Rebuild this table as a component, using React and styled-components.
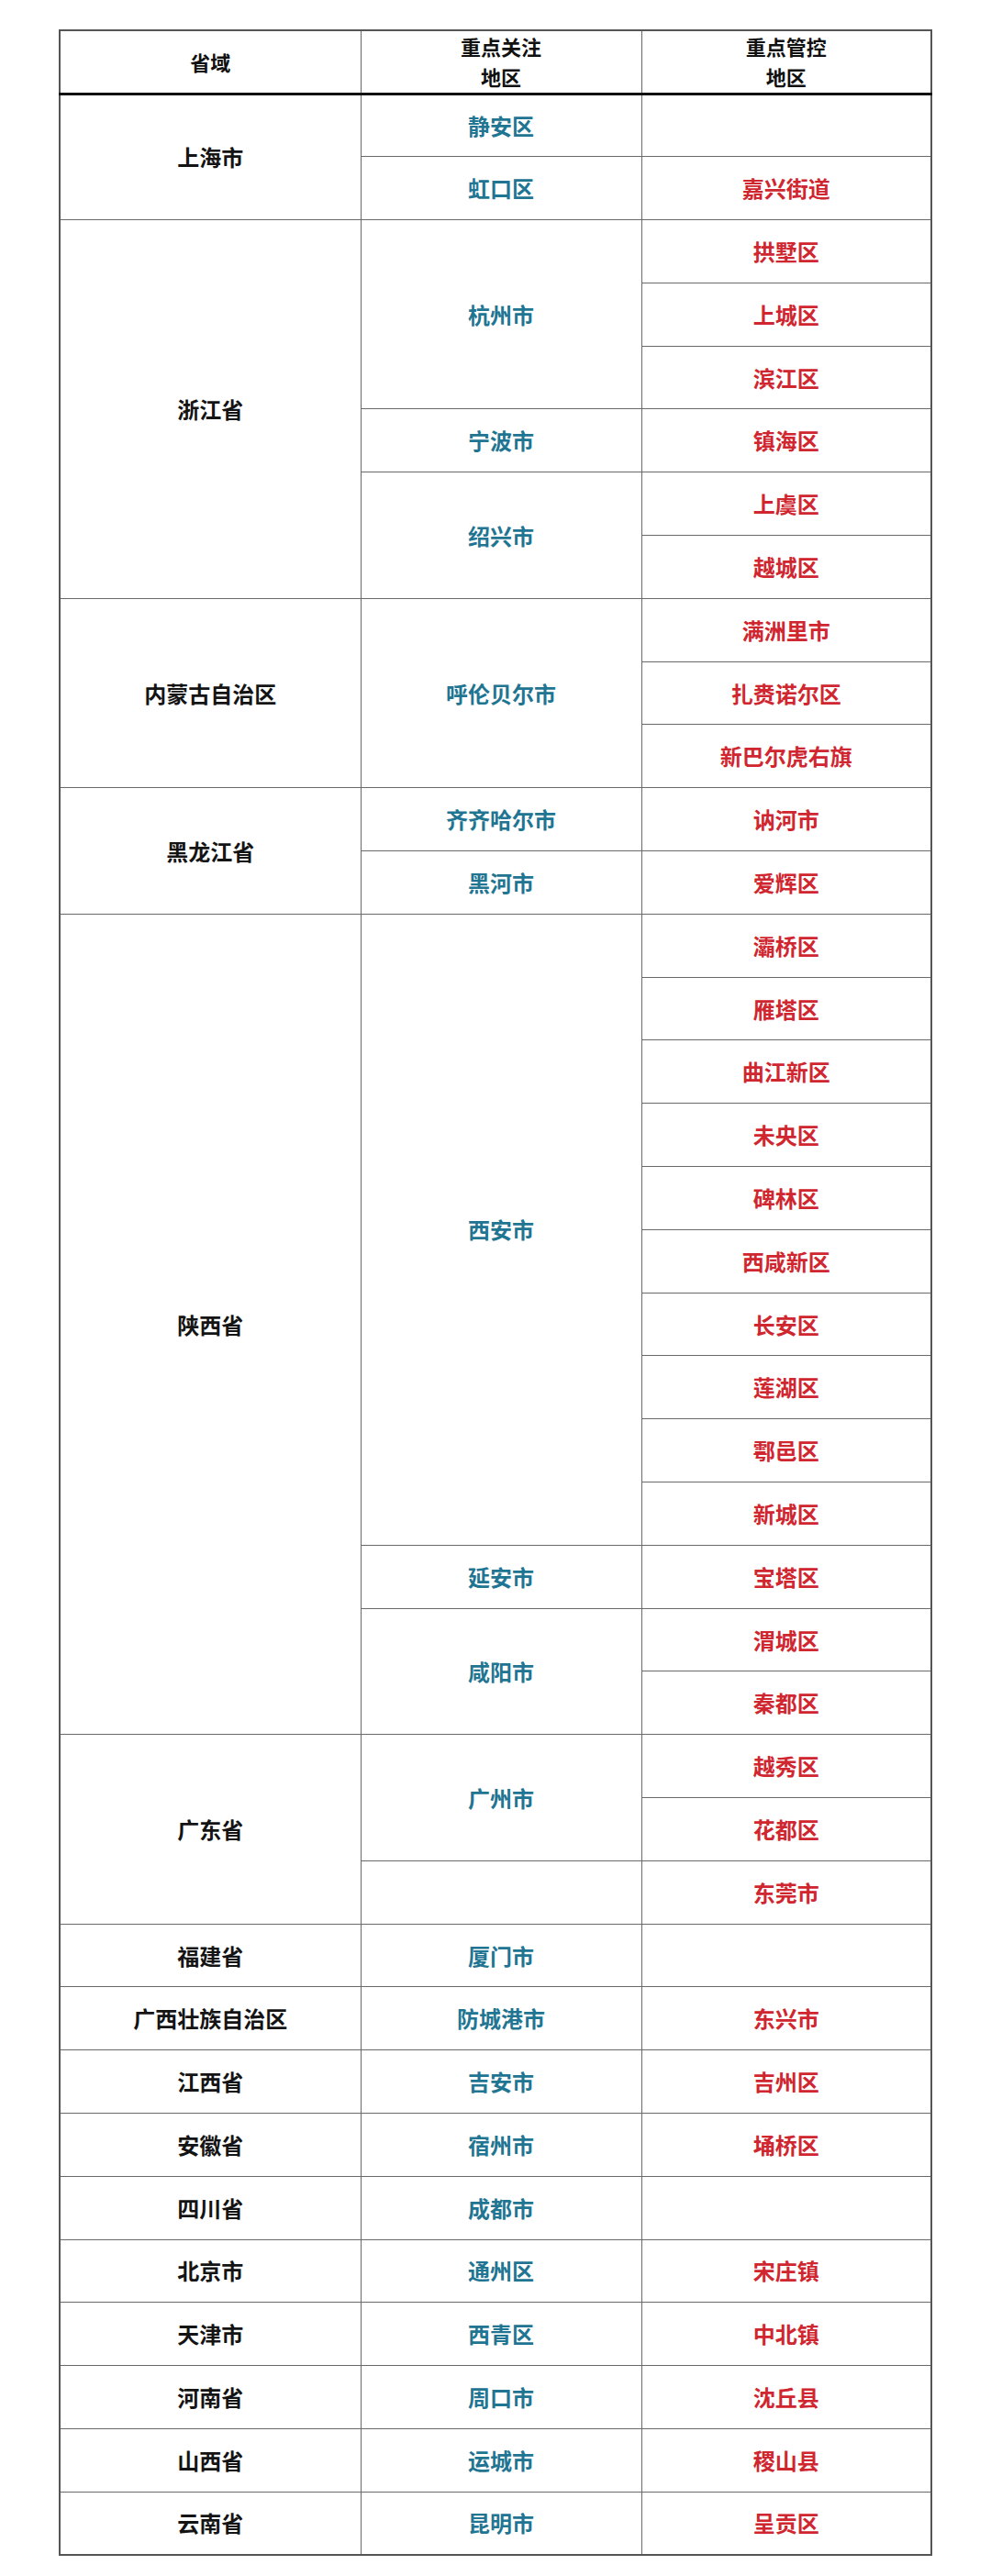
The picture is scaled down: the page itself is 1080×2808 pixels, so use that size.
import React from "react";
import styled, { createGlobalStyle } from "styled-components";

const data = [
  { name: "上海市", groups: [["静安区", [""]], ["虹口区", ["嘉兴街道"]]] },
  {
    name: "浙江省",
    groups: [
      ["杭州市", ["拱墅区", "上城区", "滨江区"]],
      ["宁波市", ["镇海区"]],
      ["绍兴市", ["上虞区", "越城区"]],
    ],
  },
  { name: "内蒙古自治区", groups: [["呼伦贝尔市", ["满洲里市", "扎赉诺尔区", "新巴尔虎右旗"]]] },
  { name: "黑龙江省", groups: [["齐齐哈尔市", ["讷河市"]], ["黑河市", ["爱辉区"]]] },
  {
    name: "陕西省",
    groups: [
      [
        "西安市",
        ["灞桥区", "雁塔区", "曲江新区", "未央区", "碑林区", "西咸新区", "长安区", "莲湖区", "鄠邑区", "新城区"],
      ],
      ["延安市", ["宝塔区"]],
      ["咸阳市", ["渭城区", "秦都区"]],
    ],
  },
  { name: "广东省", groups: [["广州市", ["越秀区", "花都区"]], ["", ["东莞市"]]] },
  { name: "福建省", groups: [["厦门市", [""]]] },
  { name: "广西壮族自治区", groups: [["防城港市", ["东兴市"]]] },
  { name: "江西省", groups: [["吉安市", ["吉州区"]]] },
  { name: "安徽省", groups: [["宿州市", ["埇桥区"]]] },
  { name: "四川省", groups: [["成都市", [""]]] },
  { name: "北京市", groups: [["通州区", ["宋庄镇"]]] },
  { name: "天津市", groups: [["西青区", ["中北镇"]]] },
  { name: "河南省", groups: [["周口市", ["沈丘县"]]] },
  { name: "山西省", groups: [["运城市", ["稷山县"]]] },
  { name: "云南省", groups: [["昆明市", ["呈贡区"]]] },
];

// flatten provinces -> one entry per table row, with rowspans on first cells
const buildRows = () => {
  const rows = [];
  data.forEach((prov) => {
    const total = prov.groups.reduce((n, g) => n + g[1].length, 0);
    prov.groups.forEach(([focus, controls], gi) => {
      controls.forEach((ctl, ci) => {
        rows.push({
          key: `${prov.name}-${gi}-${ci}`,
          prov: gi === 0 && ci === 0 ? { name: prov.name, span: total } : null,
          focus: ci === 0 ? { name: focus, span: controls.length } : null,
          ctl,
        });
      });
    });
  });
  return rows;
};

const App = () => {
  const rows = buildRows();
  return (
    <Page>
      <GlobalStyle />
      <Table>
        <colgroup>
          <Col $w={328} />
          <Col $w={306} />
          <Col $w={316} />
        </colgroup>
        <thead>
          <HeadRow>
            <Th>省域</Th>
            <Th>
              重点关注
              <br />
              地区
            </Th>
            <Th>
              重点管控
              <br />
              地区
            </Th>
          </HeadRow>
        </thead>
        <tbody>
          {rows.map((r) => (
            <Row key={r.key}>
              {r.prov && <Td rowSpan={r.prov.span}>{r.prov.name}</Td>}
              {r.focus && (
                <Td rowSpan={r.focus.span} $tone="blue">
                  {r.focus.name}
                </Td>
              )}
              <Td $tone="red">{r.ctl}</Td>
            </Row>
          ))}
        </tbody>
      </Table>
    </Page>
  );
};

export default App;

const GlobalStyle = createGlobalStyle`
  body {
    margin: 0;
    background: #fff;
    font-family: "Noto Sans CJK SC", "Noto Sans", sans-serif;
  }
`;

const Page = styled.div`
  width: 1080px;
  height: 2808px;
  padding: 32px 0 0 64px;
  box-sizing: border-box;
  background: #fff;
`;

const Table = styled.table`
  width: 950px;
  table-layout: fixed;
  border-collapse: collapse;
  border: 2px solid #555;
`;

const Col = styled.col`
  width: ${(p) => p.$w}px;
`;

const HeadRow = styled.tr`
  height: 69px;
  border-bottom: 3px solid #111;
`;

const Th = styled.th`
  border: 1.5px solid #666;
  border-bottom: 3px solid #111;
  font-size: 22px;
  font-weight: 700;
  line-height: 33px;
  color: #111;
  text-align: center;
  vertical-align: middle;
  padding: 0;
`;

const Row = styled.tr`
  height: 68.8px;
`;

const tones = {
  black: "#141414",
  blue: "#1f7592",
  red: "#d0262f",
};

const Td = styled.td`
  border: 1.5px solid #6a6a6a;
  padding: 0;
  text-align: center;
  vertical-align: middle;
  font-size: 24px;
  font-weight: 700;
  line-height: 30px;
  color: ${(p) => tones[p.$tone || "black"]};
`;
